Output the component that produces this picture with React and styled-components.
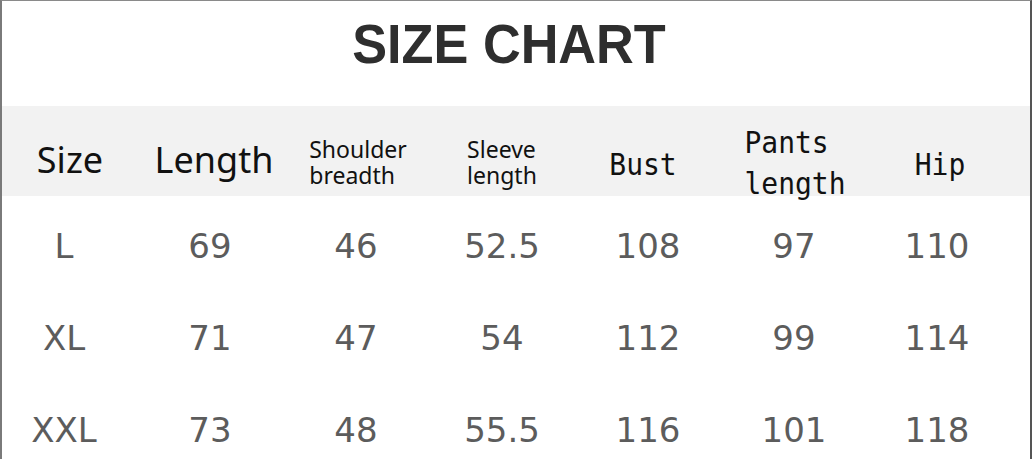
import styled, { createGlobalStyle } from "styled-components";

const GlobalStyle = createGlobalStyle`
  html, body {
    margin: 0;
    padding: 0;
    background: #ffffff;
  }
`;

const Chart = styled.div`
  box-sizing: border-box;
  width: 1032px;
  height: 459px;
  border-top: 1px solid #8a8a8a;
  border-left: 2px solid #7a7a7a;
  border-right: 2px solid #555555;
  background: #ffffff;
  overflow: hidden;
`;

const Title = styled.h1`
  margin: 0;
  height: 105px;
  padding-top: 15px;
  padding-right: 14px;
  box-sizing: border-box;
  text-align: center;
  font-family: "Liberation Sans", Arial, sans-serif;
  font-weight: 700;
  font-size: 55px;
  line-height: 56px;
  color: #2e2e2e;

  span {
    display: inline-block;
    transform: scaleX(0.95);
  }
`;

const Grid = styled.div`
  display: grid;
  grid-template-columns: repeat(7, 124px);
  column-gap: 22px;
`;

const HeaderRow = styled(Grid)`
  height: 90px;
  background: #f2f2f2;
  align-items: center;
`;

const HeadCell = styled.div`
  display: flex;
  justify-content: center;
  align-items: center;
  color: #111111;
  padding-top: ${(p) => p.$offset || 0}px;
  margin-left: ${(p) => p.$shift || 0}px;
`;

const BigHead = styled.span`
  font-family: "Noto Sans", "Open Sans", sans-serif;
  font-size: 36px;
  line-height: 40px;
`;

const SmallHead = styled.span`
  font-family: "Noto Sans", "Open Sans", sans-serif;
  font-size: 23px;
  line-height: 26px;
  text-align: left;
`;

const MonoHead = styled.span`
  font-family: "DejaVu Sans Mono", "Liberation Mono", monospace;
  font-size: 28px;
  line-height: ${(p) => p.$lh || 36}px;
  text-align: left;
  display: inline-block;
  transform: scaleY(1.08);
`;

const Body = styled.div`
  padding-top: 4px;
`;

const BodyRow = styled(Grid)`
  height: 92px;
  align-items: center;
`;

const BodyCell = styled.div`
  text-align: center;
  font-family: "DejaVu Sans", "Liberation Sans", sans-serif;
  font-size: 34px;
  color: #5c5c5c;
  margin-left: ${(p) => p.$shift || 0}px;
`;

const headers = [
  { el: <BigHead>Size</BigHead>, offset: 12, shift: 12 },
  { el: <BigHead>Length</BigHead>, offset: 12, shift: 8 },
  {
    el: (
      <SmallHead>
        Shoulder
        <br />
        breadth
      </SmallHead>
    ),
    offset: 16,
    shift: 4,
  },
  {
    el: (
      <SmallHead>
        Sleeve
        <br />
        length
      </SmallHead>
    ),
    offset: 16,
    shift: 0,
  },
  { el: <MonoHead>Bust</MonoHead>, offset: 22, shift: -10 },
  {
    el: (
      <MonoHead $lh={38}>
        Pants
        <br />
        length
      </MonoHead>
    ),
    offset: 20,
    shift: 2,
  },
  { el: <MonoHead>Hip</MonoHead>, offset: 22, shift: 0 },
];

const rows = [
  ["L", "69", "46", "52.5", "108", "97", "110"],
  ["XL", "71", "47", "54", "112", "99", "114"],
  ["XXL", "73", "48", "55.5", "116", "101", "118"],
];

const App = () => {
  return (
    <>
      <GlobalStyle />
      <Chart>
        <Title>
          <span>SIZE CHART</span>
        </Title>
        <HeaderRow>
          {headers.map((h, i) => (
            <HeadCell key={i} $offset={h.offset} $shift={h.shift}>
              {h.el}
            </HeadCell>
          ))}
        </HeaderRow>
        <Body>
          {rows.map((row) => (
            <BodyRow key={row[0]}>
              {row.map((v, i) => (
                <BodyCell key={i} $shift={i === 6 ? -6 : 0}>
                  {v}
                </BodyCell>
              ))}
            </BodyRow>
          ))}
        </Body>
      </Chart>
    </>
  );
};

export default App;
